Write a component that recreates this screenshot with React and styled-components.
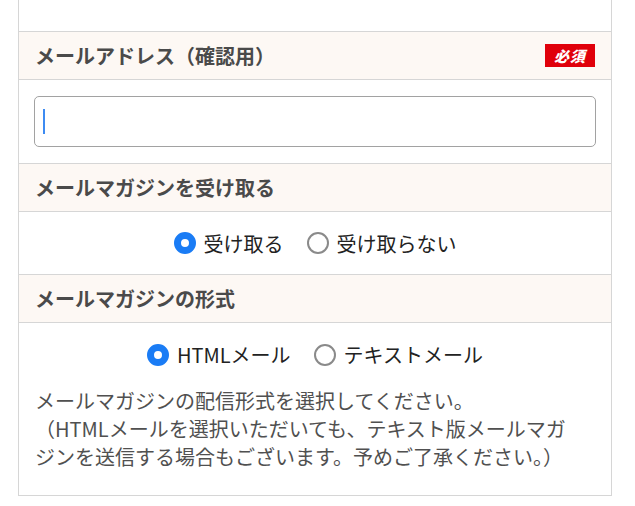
import React from 'react';
import styled, { createGlobalStyle } from 'styled-components';

const GlobalStyle = createGlobalStyle`
  html, body {
    margin: 0;
    padding: 0;
    background: #fff;
  }
  body {
    font-family: "Noto Sans CJK JP", "Noto Sans", sans-serif;
    color: #333;
  }
`;

const StyledTable = styled.div`
  width: 594px;
  margin-left: 18px;
  border-left: 1px solid #d6d6d6;
  border-right: 1px solid #d6d6d6;
  border-bottom: 1px solid #d6d6d6;
  box-sizing: border-box;
`;

const StyledTail = styled.div`
  height: 31px;
`;

const StyledHeader = styled.div`
  height: 47px;
  border-top: 1px solid #d6d6d6;
  background: #fdf8f4;
  display: flex;
  align-items: center;
  justify-content: space-between;
  padding: 0 16px;
`;

const StyledLabel = styled.div`
  font-size: 20px;
  font-weight: 700;
  color: #4a4a4a;
`;

const StyledBadge = styled.span`
  width: 50px;
  height: 23px;
  background: #e0000b;
  color: #fff;
  font-size: 15px;
  font-weight: 900;
  font-style: italic;
  display: flex;
  align-items: center;
  justify-content: center;
  letter-spacing: 1px;
`;

const StyledCell = styled.div`
  border-top: 1px solid #d6d6d6;
  padding: ${(p) => p.padding || '0'};
  height: ${(p) => p.height || 'auto'};
  box-sizing: border-box;
  display: flex;
  flex-direction: column;
  justify-content: ${(p) => (p.center ? 'center' : 'flex-start')};
`;

const StyledInput = styled.div`
  height: 52px;
  border: 1px solid #a2a2a2;
  border-radius: 5px;
  box-sizing: border-box;
  display: flex;
  align-items: center;
  padding-left: 8px;
  background: #fff;
`;

const StyledCaret = styled.span`
  width: 2px;
  height: 25px;
  background: #3d8bf2;
`;

const StyledRadioGroup = styled.div`
  display: flex;
  justify-content: center;
  align-items: center;
  gap: 23px;
`;

const StyledOption = styled.label`
  display: flex;
  align-items: center;
  gap: 8px;
  font-size: 20px;
  color: #222;
`;

const StyledRadio = styled.span`
  width: 22px;
  height: 22px;
  border-radius: 50%;
  box-sizing: border-box;
  border: ${(p) => (p.checked ? '7px solid #1a7cf5' : '2px solid #8a8a8a')};
  background: #fff;
  flex-shrink: 0;
`;

const StyledNote = styled.p`
  margin: 18px 0 0;
  padding-right: 14px;
  font-size: 20px;
  line-height: 28px;
  color: #505050;
`;

const Radio = ({ checked, label }) => (
  <StyledOption>
    <StyledRadio checked={checked} />
    {label}
  </StyledOption>
);

const App = () => {
  return (
    <>
      <GlobalStyle />
      <StyledTable>
        <StyledTail />

        <StyledHeader>
          <StyledLabel>メールアドレス（確認用）</StyledLabel>
          <StyledBadge>必須</StyledBadge>
        </StyledHeader>
        <StyledCell padding="16px 15px" height="84px">
          <StyledInput>
            <StyledCaret />
          </StyledInput>
        </StyledCell>

        <StyledHeader>
          <StyledLabel>メールマガジンを受け取る</StyledLabel>
        </StyledHeader>
        <StyledCell height="63px" center>
          <StyledRadioGroup>
            <Radio checked label="受け取る" />
            <Radio label="受け取らない" />
          </StyledRadioGroup>
        </StyledCell>

        <StyledHeader>
          <StyledLabel>メールマガジンの形式</StyledLabel>
        </StyledHeader>
        <StyledCell padding="17px 16px 24px">
          <StyledRadioGroup>
            <Radio checked label="HTMLメール" />
            <Radio label="テキストメール" />
          </StyledRadioGroup>
          <StyledNote>
            メールマガジンの配信形式を選択してください。<br />
            （HTMLメールを選択いただいても、テキスト版メールマガジンを送信する場合もございます。予めご了承ください。）
          </StyledNote>
        </StyledCell>
      </StyledTable>
    </>
  );
};

export default App;
